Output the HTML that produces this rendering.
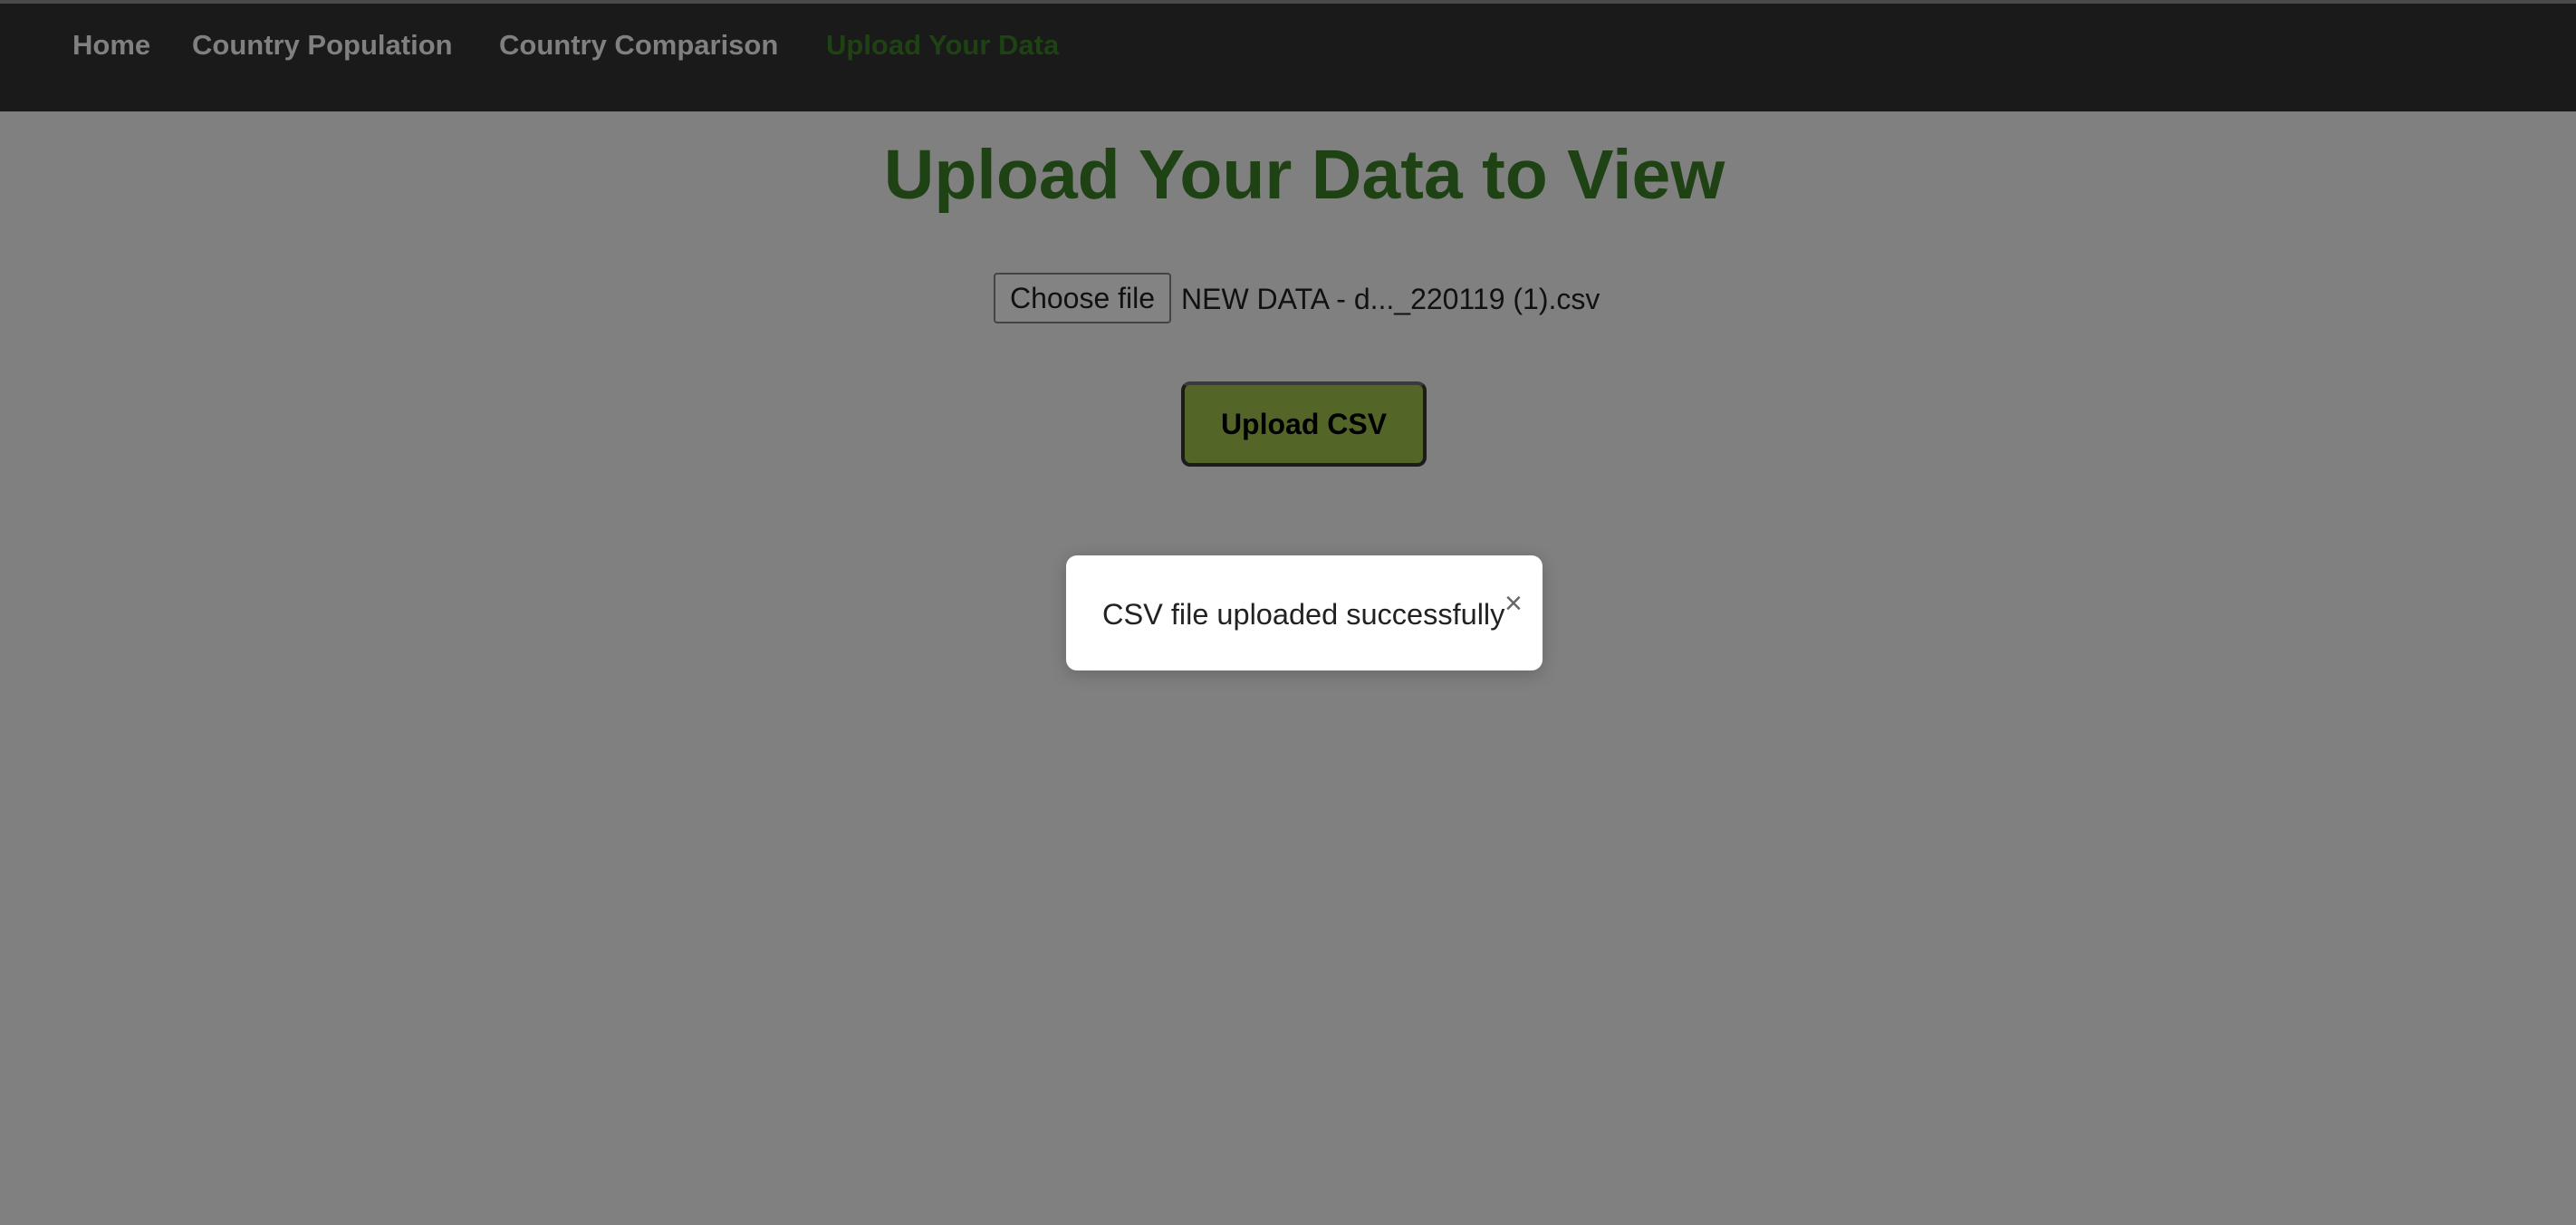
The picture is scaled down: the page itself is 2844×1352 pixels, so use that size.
<!DOCTYPE html>
<html><head><style>
html,body{margin:0;padding:0;width:2844px;height:1352px;overflow:hidden;background:#808080;font-family:"Liberation Sans",sans-serif;}
.top{position:absolute;left:0;top:0;width:2844px;height:4px;background:#4a4a4a;}
nav{position:absolute;left:0;top:4px;width:2844px;height:119px;background:#1a1a1a;}
nav span{position:absolute;top:28px;font-size:31px;font-weight:bold;color:#808080;white-space:nowrap;}
h1{position:absolute;left:18px;width:2844px;top:149px;margin:0;text-align:center;font-size:77px;font-weight:bold;color:#1e4214;}
.choose{position:absolute;left:1097px;top:301px;width:196px;height:56px;border:2px solid #444;border-radius:4px;background:#838383;box-sizing:border-box;font-size:32px;line-height:52px;text-align:center;color:#111;}
.fname{position:absolute;left:1304px;top:301px;line-height:58px;font-size:32px;color:#111;white-space:nowrap;}
.btn{position:absolute;left:1304px;top:421px;width:271px;height:94px;box-sizing:border-box;border:4px solid #1c1c1c;border-top-color:#3a3a3a;border-radius:10px;background:#536627;font-size:32px;font-weight:bold;line-height:86px;text-align:center;color:#000;}
.toast{position:absolute;left:1177px;top:613px;width:526px;height:127px;background:#fff;border-radius:12px;box-shadow:0 4px 20px rgba(0,0,0,.2);}
.toast .t{position:absolute;left:40px;top:47px;font-size:32.5px;color:#222;white-space:nowrap;}
.toast .x{position:absolute;left:484px;top:34px;font-size:34px;color:#666;}
</style></head><body>
<div class="top"></div>
<nav>
<span style="left:80px">Home</span>
<span style="left:212px">Country Population</span>
<span style="left:551px">Country Comparison</span>
<span style="left:912px;color:#1e4214">Upload Your Data</span>
</nav>
<h1>Upload Your Data to View</h1>
<div class="choose">Choose file</div>
<div class="fname">NEW DATA - d..._220119 (1).csv</div>
<div class="btn">Upload CSV</div>
<div class="toast"><div class="t">CSV file uploaded successfully</div><div class="x">×</div></div>
</body></html>
